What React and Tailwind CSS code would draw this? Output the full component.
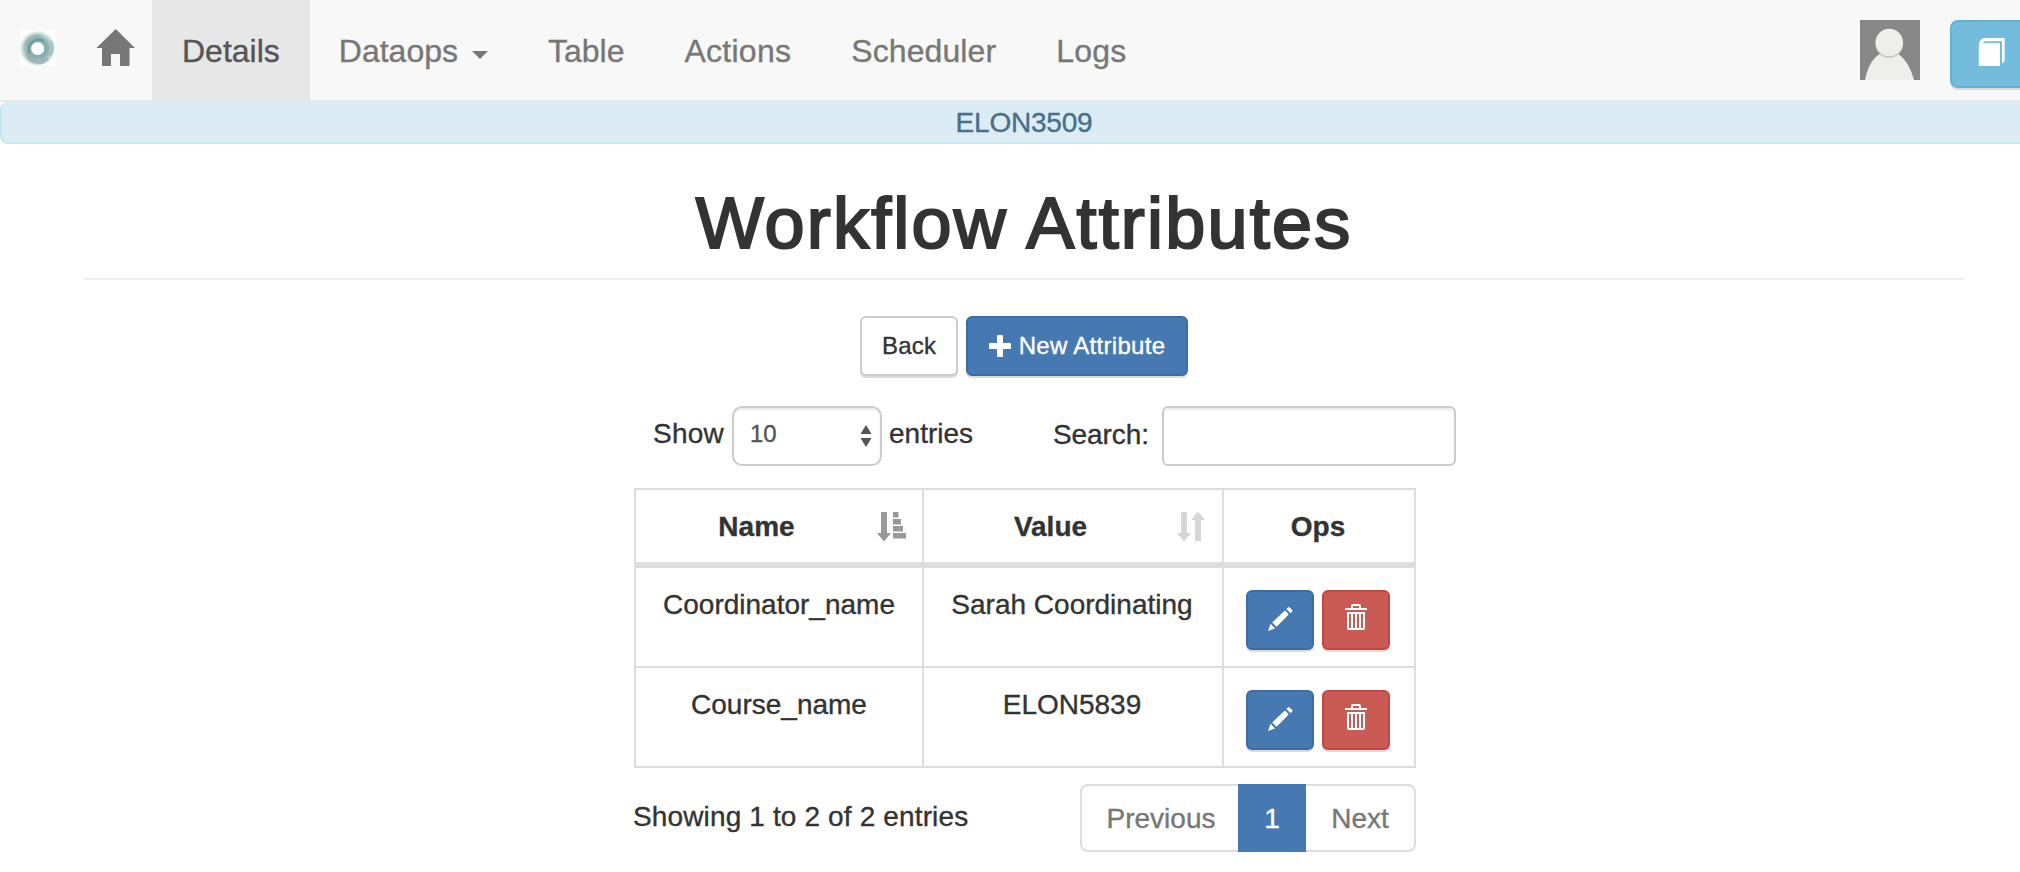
import React from "react";

function Logo() {
  return (
    <svg width="36" height="36" viewBox="0 0 36 36" className="block">
      <defs>
        <radialGradient id="ring" cx="17.5" cy="18.5" r="18" gradientUnits="userSpaceOnUse">
          <stop offset="0.3" stopColor="#fff" />
          <stop offset="0.4" stopColor="#86aead" />
          <stop offset="0.55" stopColor="#86b0b0" />
          <stop offset="0.72" stopColor="#a9c2c3" />
          <stop offset="0.88" stopColor="#cfe6e2" />
          <stop offset="1" stopColor="#fff" />
        </radialGradient>
      </defs>
      <rect width="36" height="36" fill="#fff" />
      <circle cx="17.5" cy="18" r="18" fill="url(#ring)" />
      <path d="M5 15A13 13 0 0 1 21 6" fill="none" stroke="#a3aaae" strokeWidth="2" opacity="0.6" />
      <path d="M7 24A12 12 0 0 0 28 28" fill="none" stroke="#a2a0a9" strokeWidth="3" opacity="0.6" />
      <path d="M9.5 23A10 10 0 0 1 24 11" fill="none" stroke="#579b97" strokeWidth="2.5" opacity="0.65" />
      <path d="M31 11A14 14 0 0 1 30 26" fill="none" stroke="#6fb5ab" strokeWidth="2" opacity="0.55" />
      <circle cx="18.3" cy="19" r="5.8" fill="#fff" />
    </svg>
  );
}

function Home() {
  return (
    <svg width="40" height="38" viewBox="0 0 40 38" className="block" fill="#777">
      <path d="M19.8 0 39 19H33.5V36.2Q33.5 37 32.7 37H24V25H15V37H6.8Q6 37 6 36.2V19H.4Z" />
    </svg>
  );
}

function Avatar() {
  return (
    <svg width="60" height="60" viewBox="0 0 60 60" className="block">
      <rect width="60" height="60" fill="#888" />
      <path d="M5 60C7 49 12 38 20 34H38C46 39 51 49 54 60Z" fill="#eeeeec" />
      <circle cx="29.3" cy="23.8" r="13.9" fill="#c2c2c1" />
      <circle cx="29.3" cy="22.5" r="13.7" fill="#eeeeec" />
    </svg>
  );
}

function Book() {
  return (
    <svg width="28" height="28" viewBox="0 0 28 28" className="block">
      <path d="M0.8 28V5.8C1.5 3.2 3 .8 5.5 0H26.6V23L24 25.5V3.2H6.5L4.5 5H22V28Z" fill="#fff" />
    </svg>
  );
}

function Plus() {
  return (
    <svg width="22" height="22" viewBox="0 0 22 22" className="block" fill="#fff">
      <path d="M9 0h4q1 0 1 1v7h7q1 0 1 1v4q0 1-1 1h-7v7q0 1-1 1H9q-1 0-1-1v-7H1q-1 0-1-1V9q0-1 1-1h7V1q0-1 1-1Z" />
    </svg>
  );
}

function Pencil() {
  return (
    <svg width="25" height="25" viewBox="0 0 25 25" className="block" fill="#fff">
      <path d="M0 25 2.6 17.8 7 22.4ZM4.2 16.4 16.3 4.9Q17 4.4 17.6 5L20.2 7.7Q20.6 8.3 20.2 8.9L8.6 20.8ZM18.4 3 19.9 1.4Q20.7.6 21.6 1.4L24.2 4Q24.9 4.8 24.2 5.6L22.6 7.2Z" />
    </svg>
  );
}

function Trash() {
  return (
    <svg width="22" height="26" viewBox="0 0 22 26" className="block">
      <path
        fill="#fff"
        fillRule="evenodd"
        d="M0 4H6V2Q6 0 8 0H14Q16 0 16 2V4H22V6H0ZM8 2V4H14V2ZM2 8H20V24Q20 26 18 26H4Q2 26 2 24ZM4 10V24H6V10ZM8 10V24H10V10ZM12 10V24H14V10ZM16 10V24H18V10Z"
      />
    </svg>
  );
}

function SortAsc() {
  return (
    <svg width="30" height="30" viewBox="0 0 30 30" className="block" fill="#999">
      <path d="M4 0H10V21H14L7.5 29H6.5L0 21H4ZM16 0H21.5V5.5H16ZM16 7H24V12.5H16ZM16 14H26V19.5H16ZM16 21H29V26.5H16Z" />
    </svg>
  );
}

function SortBoth() {
  return (
    <svg width="30" height="30" viewBox="0 0 30 30" className="block" fill="#d6d6d6">
      <path d="M4 0H10V21H14L7.5 29H6.5L0 21H4ZM18 29V8H14L20.5 0H21.5L28 8H24V29Z" />
    </svg>
  );
}

function NavItem({ children, active }) {
  return (
    <a className={"flex h-[100px] items-center px-[30px] text-[32px] leading-[40px] " + (active ? "bg-[#e7e7e7] text-[#555]" : "text-[#777]")}>
      <span className="pt-0.5">{children}</span>
    </a>
  );
}

const rows = [
  ["Coordinator_name", "Sarah Coordinating"],
  ["Course_name", "ELON5839"],
];

const btn = "flex h-[60px] items-center justify-center rounded-[6px] border-2 shadow-[0_2px_0_rgba(0,0,0,0.14)] ";

export default function App() {
  return (
    <div className="h-[872px] w-[2020px] overflow-hidden bg-white font-['Liberation_Sans',Arial,sans-serif] text-[28px] leading-[40px] text-[#333] [-webkit-text-stroke:0.35px_currentColor]">
      <div className="w-[2048px]">
        <nav className="flex h-[102px] border-b-2 border-[#e7e7e7] bg-[#f8f8f8]">
          <div className="pt-[30px] pl-5">
            <Logo />
          </div>
          <div className="w-[96px] pt-[29px] pl-10">
            <Home />
          </div>
          <NavItem active>Details</NavItem>
          <NavItem>
            <span className="-ml-px flex items-center">
              Dataops
              <svg width="16" height="8" viewBox="0 0 16 8" className="mt-[7px] ml-[14px]" fill="#777">
                <path d="M0 0H16L8 8Z" />
              </svg>
            </span>
          </NavItem>
          <NavItem>Table</NavItem>
          <NavItem>
            <span className="tracking-[0.25px]">Actions</span>
          </NavItem>
          <NavItem>
            <span className="tracking-[0.1px]">Scheduler</span>
          </NavItem>
          <NavItem>
            <span className="tracking-[0.2px]">Logs</span>
          </NavItem>
          <div className="ml-auto flex w-[188px] shrink-0 gap-[30px] pt-5">
            <Avatar />
            <button className="flex h-[68px] w-[90px] shrink-0 items-start rounded-[8px] border-2 border-[#62b4d4] bg-[#74bcdb] pt-4 pl-[26px] shadow-[0_2px_0_rgba(0,0,0,0.12)]">
              <Book />
            </button>
          </div>
        </nav>

        <div className="h-[42px] rounded-[8px] border-x-2 border-b-2 border-[#c4e8f0] bg-[#dcecf4] text-center text-[#456f8c]">
          <div className="pt-px leading-[40px] tracking-[-0.2px]">ELON3509</div>
        </div>

        <main className="mx-[84px]">
          <h1 className="h-[136px] border-b-2 border-[#eee] pt-[39px] text-center text-[72px] leading-[80px] tracking-[2.2px] [-webkit-text-stroke:2.2px_#333]">
            Workflow Attributes
          </h1>

          <div className="mt-9 flex justify-center gap-2 text-[24px]">
            <button className={btn + "w-[98px] border-[#ccc] bg-white tracking-[0.2px]"}>Back</button>
            <button className={btn + "w-[222px] gap-2 border-[#3d6ca4] bg-[#4679b2] text-white"}>
              <Plus />
              <span className="tracking-[0.3px]">New Attribute</span>
            </button>
          </div>

          <div className="mt-[30px] flex items-start pl-[569px]">
            <label className="flex items-center">
              <span className="w-[79px] pb-[5px] tracking-[0.2px]">Show</span>
              <span className="flex h-[60px] w-[150px] items-center justify-between rounded-[10px] border-2 border-[#ccc] pr-2 pl-4 text-[24px] text-[#555] shadow-[inset_0_2px_2px_rgba(0,0,0,0.075)]">
                <span className="pb-1">10</span>
                <svg width="12" height="22" viewBox="0 0 12 22" className="block" fill="#555">
                  <path d="M0.5 9H11.5L6 0ZM0.5 13H11.5L6 22Z" />
                </svg>
              </span>
              <span className="pb-[5px] pl-[7px]">entries</span>
            </label>
            <label className="ml-[80px] flex items-center">
              <span className="w-[109px] pb-0.5 tracking-[-0.1px]">Search:</span>
              <input className="h-[60px] w-[294px] rounded-[6px] border-2 border-[#ccc] bg-white shadow-[inset_0_2px_2px_rgba(0,0,0,0.075)]" />
            </label>
          </div>

          <div className="ml-[550px] w-[782px] pt-[22px]">
            <table className="w-full table-fixed border-separate border-spacing-0 border-t-2 border-l-2 border-[#ddd] text-center">
              <colgroup>
                <col className="w-[288px]" />
                <col className="w-[300px]" />
                <col className="w-[192px]" />
              </colgroup>
              <thead>
                <tr className="h-[78px]">
                  <th className="border-r-2 border-b-[6px] border-[#ddd] p-0 pt-px">
                    <div className="flex items-center">
                      <span className="w-[241px]">Name</span>
                      <SortAsc />
                    </div>
                  </th>
                  <th className="border-r-2 border-b-[6px] border-[#ddd] p-0 pt-px">
                    <div className="flex items-center">
                      <span className="w-[253px]">Value</span>
                      <SortBoth />
                    </div>
                  </th>
                  <th className="border-r-2 border-b-[6px] border-[#ddd] p-0 pt-px pr-0.5">Ops</th>
                </tr>
              </thead>
              <tbody>
                {rows.map(([name, value]) => (
                  <tr key={name} className="h-[100px] align-top">
                    <td className="border-r-2 border-b-2 border-[#ddd] p-0 pt-[17px]">{name}</td>
                    <td className="border-r-2 border-b-2 border-[#ddd] p-0 pt-[17px] pr-0.5">{value}</td>
                    <td className="border-r-2 border-b-2 border-[#ddd] p-0 pt-[22px] pl-[22px]">
                      <div className="flex gap-2">
                        <button className={btn + "w-[68px] border-[#3d6ca4] bg-[#4679b2] pb-1"}>
                          <Pencil />
                        </button>
                        <button className={btn + "w-[68px] border-[#c4463f] bg-[#c95b54] pb-1.5"}>
                          <Trash />
                        </button>
                      </div>
                    </td>
                  </tr>
                ))}
              </tbody>
            </table>
            <div className="flex justify-between pt-4">
              <span className="-ml-px pt-[13px] tracking-[0.14px]">Showing 1 to 2 of 2 entries</span>
              <div className="flex h-[68px] text-[#777]">
                <a className="flex w-[158px] items-center justify-center rounded-l-[8px] border-y-2 border-l-2 border-[#ddd] pt-px pl-0.5">Previous</a>
                <a className="flex w-[68px] items-center justify-center bg-[#4679b2] pt-px text-white">1</a>
                <a className="flex w-[110px] items-center justify-center rounded-r-[8px] border-y-2 border-r-2 border-[#ddd] pt-px">Next</a>
              </div>
            </div>
          </div>
        </main>
      </div>
    </div>
  );
}
